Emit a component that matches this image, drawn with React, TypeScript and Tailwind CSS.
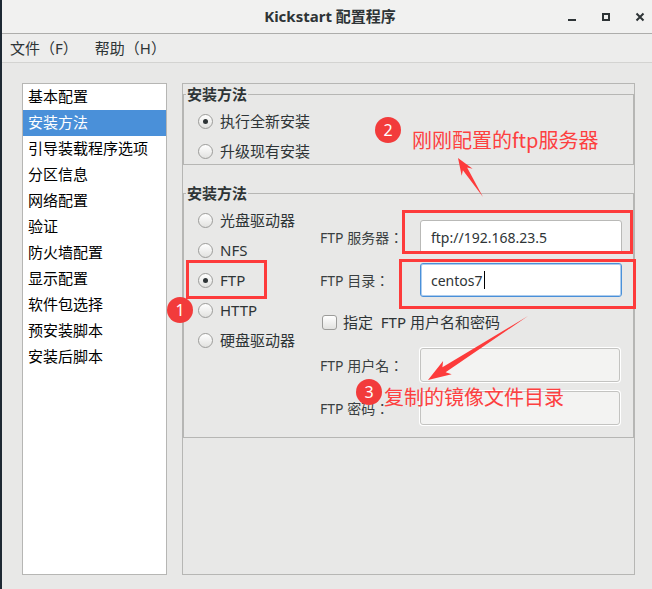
import React from 'react'

const NAV_ITEMS = [
  '基本配置',
  '安装方法',
  '引导装载程序选项',
  '分区信息',
  '网络配置',
  '验证',
  '防火墙配置',
  '显示配置',
  '软件包选择',
  '预安装脚本',
  '安装后脚本',
]

const FONT = "font-[family-name:'Noto_Sans','Noto_Sans_CJK_SC',sans-serif]"
const RED_FONT = "font-[family-name:'Noto_Sans_CJK_SC','Noto_Sans',sans-serif]"

function Radio({ label, checked }: { label: string; checked?: boolean }) {
  return (
    <div className="flex h-[30px] items-center gap-[7px]">
      <span className="flex h-[15px] w-[15px] items-center justify-center rounded-full border border-[#9c9c9a] bg-linear-to-b from-white to-[#e2e2e0]">
        {checked && <span className="h-[5px] w-[5px] rounded-full bg-[#2e3436]" />}
      </span>
      <span className="text-[15px] leading-none text-[#2e3436]">{label}</span>
    </div>
  )
}

function Field({ label, children }: { label: string; children: React.ReactNode }) {
  return (
    <div className="flex h-[34px] items-center">
      <span className="w-[100px] font-[family-name:'Noto_Sans','Noto_Sans_CJK_TC',sans-serif] text-[14px] text-[#3a3f41]">
        {label}
      </span>
      {children}
    </div>
  )
}

// tapered arrow like the screenshot tool draws
function arrow(x1: number, y1: number, x2: number, y2: number, head: number, headW: number, shaftW: number) {
  const len = Math.hypot(x2 - x1, y2 - y1)
  const ux = (x2 - x1) / len
  const uy = (y2 - y1) / len
  const nx = -uy
  const ny = ux
  const bx = x2 - ux * head
  const by = y2 - uy * head
  const jx = bx + ux * 4
  const jy = by + uy * 4
  const pts = [
    [x1, y1],
    [jx + (nx * shaftW) / 2, jy + (ny * shaftW) / 2],
    [bx + (nx * headW) / 2, by + (ny * headW) / 2],
    [x2, y2],
    [bx - (nx * headW) / 2, by - (ny * headW) / 2],
    [jx - (nx * shaftW) / 2, jy - (ny * shaftW) / 2],
  ]
  return pts.map((p) => p.map((v) => v.toFixed(1)).join(',')).join(' ')
}

function Badge({ n, className }: { n: string; className: string }) {
  return (
    <div
      className={`absolute flex h-[26px] w-[26px] items-center justify-center rounded-full bg-[#f23b3b] text-[16px] leading-none text-white ${className}`}
    >
      {n}
    </div>
  )
}

export default function App() {
  return (
    <div className={`relative flex h-[589px] w-[652px] overflow-hidden bg-[#e8e8e7] ${FONT}`}>
      <div className="w-[2px] shrink-0 bg-[#1d2833]" />

      <div className="flex min-w-0 flex-1 flex-col">
        {/* Title bar */}
        <div className="grid h-[34px] grid-cols-[1fr_auto_1fr] items-center border-b border-[#adadab] bg-[#f1f1f0]">
          <div />
          <div className="pl-[6px] text-[15px] font-bold text-[#2e3436]">Kickstart 配置程序</div>
          <div className="flex items-center justify-end gap-[24px] pr-[7px]">
            <svg width="10" height="10" viewBox="0 0 10 10">
              <rect x="1" y="7" width="8" height="2" fill="#2e3436" />
            </svg>
            <svg width="10" height="10" viewBox="0 0 10 10">
              <rect x="2" y="2" width="6" height="6" fill="none" stroke="#2e3436" strokeWidth="2" />
            </svg>
            <svg width="10" height="10" viewBox="0 0 10 10">
              <path d="M1.5 1.5L8.5 8.5M8.5 1.5L1.5 8.5" stroke="#2e3436" strokeWidth="2" />
            </svg>
          </div>
        </div>

        {/* Menu bar */}
        <div className="flex h-[29px] items-center gap-[17px] border-b border-[#d3d3d1] bg-[#ededec] pl-[8px] text-[15px] text-[#2e3436]">
          <span>文件（F）</span>
          <span>帮助（H）</span>
        </div>

        {/* Body */}
        <div className="flex gap-[15px] pl-[20px] pt-[20px]">
          <ul className="h-[492px] w-[145px] border border-[#b6b6b4] bg-white">
            {NAV_ITEMS.map((item, i) => (
              <li
                key={item}
                className={`flex h-[26px] items-center pl-[5px] pb-[1px] text-[15px] ${
                  i === 1 ? 'bg-[#4a90d9] text-white' : 'text-black'
                }`}
              >
                {item}
              </li>
            ))}
          </ul>

          <div className="h-[492px] w-[453px] border border-[#b6b6b4]">
            {/* 安装方法 1 */}
            <fieldset className="h-[81px] border border-[#b6b6b4]">
              <legend className="ml-[2px] px-[1px] text-[15px] leading-[20px] font-bold text-[#2e3436]">安装方法</legend>
              <div className="pl-[14px] pt-[2px]">
                <Radio label="执行全新安装" checked />
                <Radio label="升级现有安装" />
              </div>
            </fieldset>

            {/* 安装方法 2 */}
            <fieldset className="mt-[18px] h-[255px] border border-[#b6b6b4]">
              <legend className="ml-[2px] px-[1px] text-[15px] leading-[20px] font-bold text-[#2e3436]">安装方法</legend>
              <div className="flex">
                <div className="w-[136px] pl-[14px] pt-[2px]">
                  <Radio label="光盘驱动器" />
                  <Radio label="NFS" />
                  <Radio label="FTP" checked />
                  <Radio label="HTTP" />
                  <Radio label="硬盘驱动器" />
                </div>

                <div className="flex flex-col pt-[17px]">
                  <Field label="FTP 服务器：">
                    <div className="flex h-[34px] w-[202px] items-center rounded-[3px] border border-[#b9b9b7] bg-white pl-[10px] text-[14px] text-[#2e3436]">
                      ftp://192.168.23.5
                    </div>
                  </Field>
                  <div className="mt-[9px]">
                    <Field label="FTP 目录：">
                      <div className="flex h-[34px] w-[202px] items-center rounded-[3px] border border-[#4a90d9] bg-white pl-[10px] text-[14px] text-[#2e3436] shadow-[inset_0_0_0_1px_rgba(74,144,217,0.45)]">
                        centos7
                        <span className="ml-[1px] inline-block h-[18px] w-px bg-black" />
                      </div>
                    </Field>
                  </div>
                  <div className="flex h-[51px] items-center gap-[6px] pl-[2px]">
                    <span className="h-[15px] w-[15px] rounded-[3px] border border-[#9c9c9a] bg-linear-to-b from-white to-[#e2e2e0]" />
                    <span className="whitespace-pre text-[15px] text-[#2e3436]">指定  FTP 用户名和密码</span>
                  </div>
                  <Field label=" FTP 用户名：">
                    <div className="h-[34px] w-[200px] rounded-[3px] border border-[#c3c3c1] bg-[#f3f3f2] shadow-[0_0_0_1px_white]" />
                  </Field>
                  <div className="mt-[9px]">
                    <Field label=" FTP 密码：">
                      <div className="h-[34px] w-[200px] rounded-[3px] border border-[#c3c3c1] bg-[#f3f3f2] shadow-[0_0_0_1px_white]" />
                    </Field>
                  </div>
                </div>
              </div>
            </fieldset>
          </div>
        </div>
      </div>

      {/* Annotations */}
      <div className="absolute left-[186px] top-[260px] h-[39px] w-[81px] border-[3px] border-[#fd3b3b]" />
      <div className="absolute left-[402px] top-[210px] h-[44px] w-[231px] border-[3px] border-[#fd3b3b]" />
      <div className="absolute left-[399px] top-[259px] h-[50px] w-[237px] border-[3px] border-[#fd3b3b]" />

      <svg className="pointer-events-none absolute inset-0" width="652" height="589">
        <polygon points={arrow(483, 197, 458, 158, 17, 13, 5)} fill="#fd3b3b" />
        <polygon points={arrow(528, 316, 428, 380, 23, 16, 6)} fill="#fd3b3b" />
      </svg>

      <Badge n="1" className="left-[167px] top-[297px]" />
      <Badge n="2" className="left-[375px] top-[117px]" />
      <Badge n="3" className="left-[356px] top-[379px]" />

      <div className={`absolute left-[412px] top-[130px] text-[20px] leading-[20px] text-[#fd4040] ${RED_FONT}`}>
        刚刚配置的ftp服务器
      </div>
      <div className={`absolute left-[384px] top-[387px] text-[20px] leading-[20px] text-[#fd4040] ${RED_FONT}`}>
        复制的镜像文件目录
      </div>
    </div>
  )
}
